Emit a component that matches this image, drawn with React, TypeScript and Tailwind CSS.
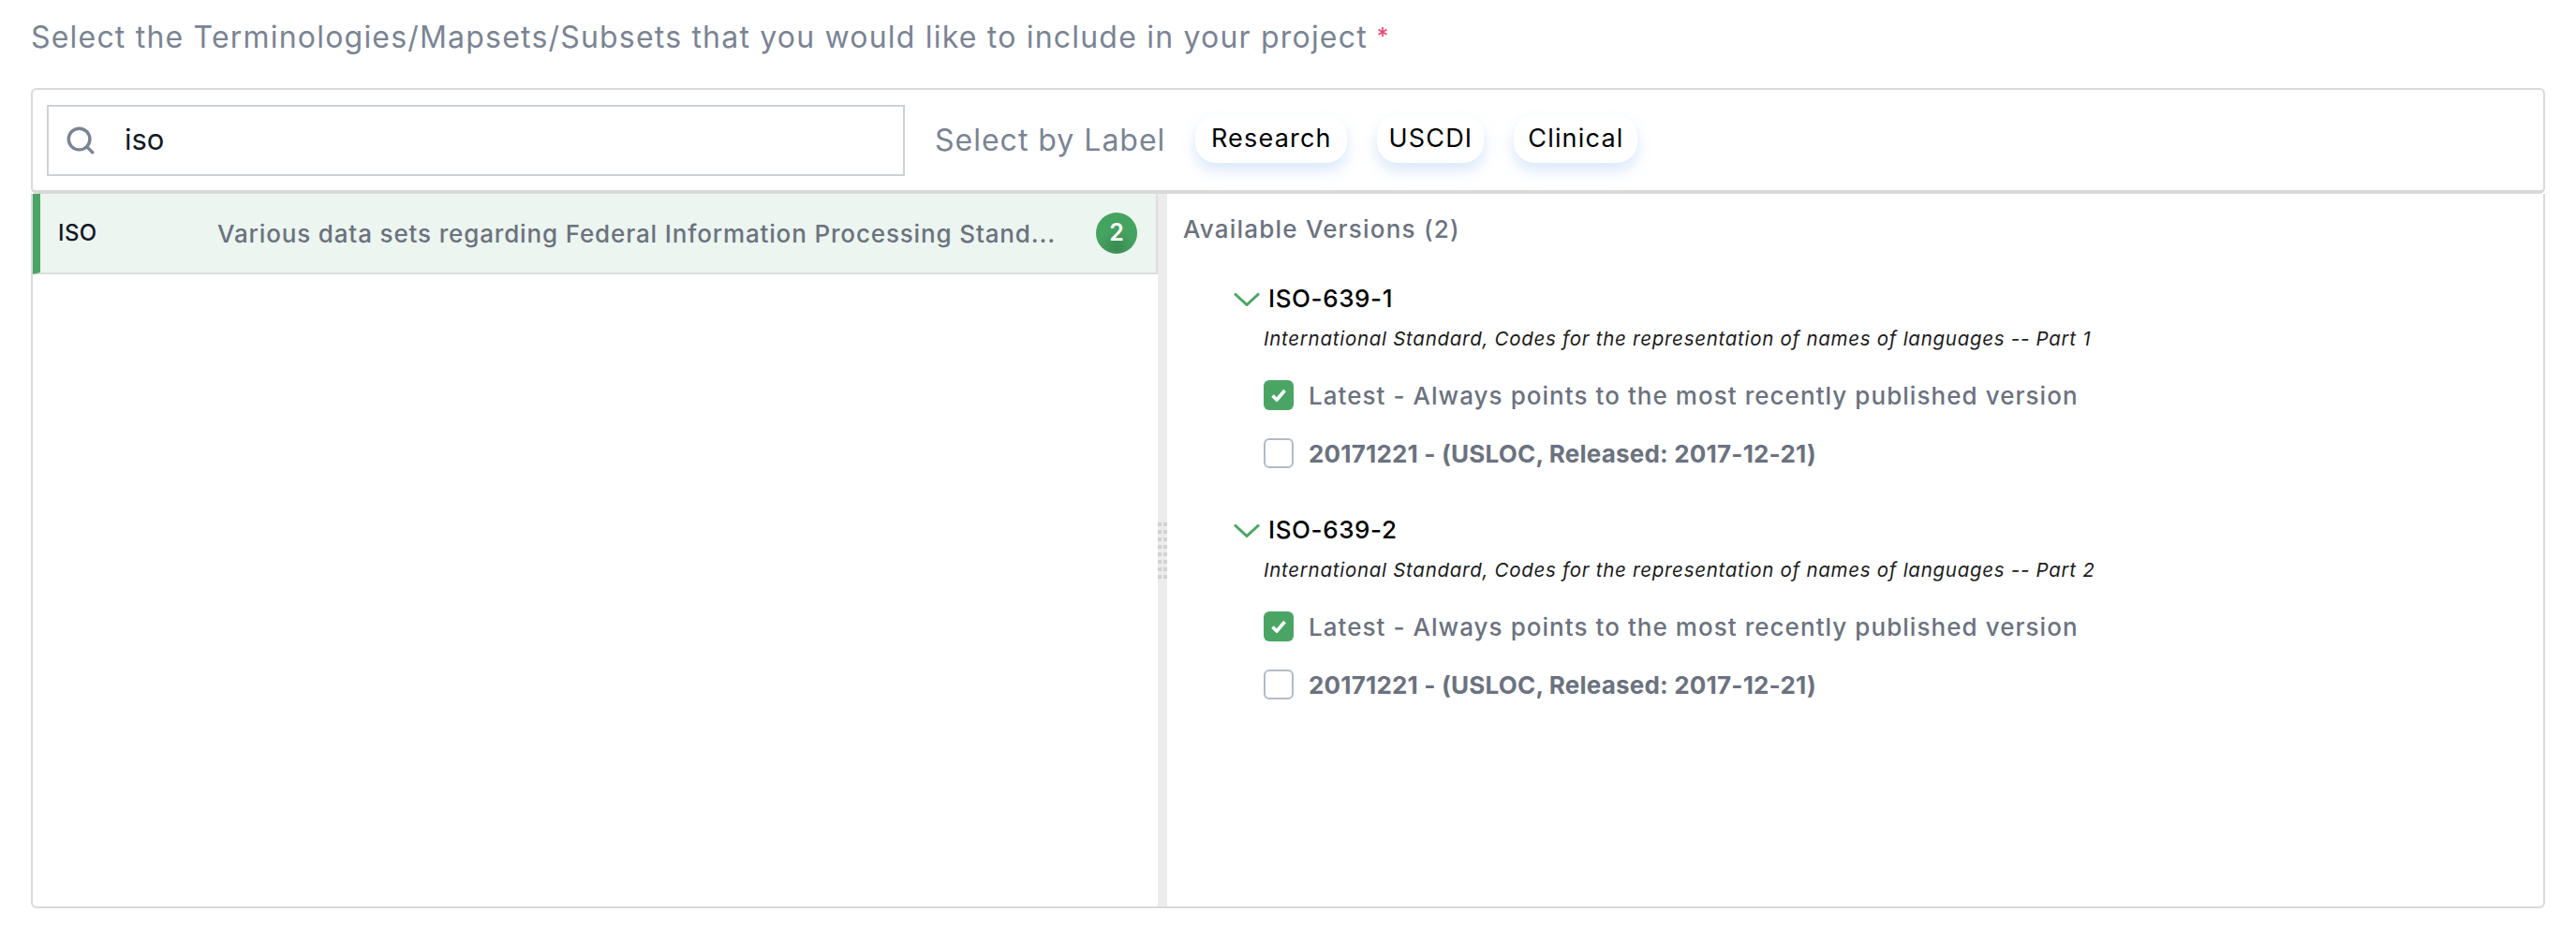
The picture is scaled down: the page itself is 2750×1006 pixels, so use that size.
import { Search } from "lucide-react"

const font = { fontFamily: "Inter, 'Noto Sans', sans-serif" }

function Chevron() {
  return (
    <svg width="28" height="15" viewBox="0 0 28 15" fill="none" className="shrink-0">
      <path d="M1 1.5 L14 13.5 L27 1.5" stroke="#4aa564" strokeWidth="3" />
    </svg>
  )
}

function Checkbox({ checked }: { checked?: boolean }) {
  if (checked) {
    return (
      <div className="flex h-8 w-8 shrink-0 items-center justify-center rounded-md bg-[#4aa564]">
        <svg width="16" height="14" viewBox="0 0 16 14" fill="none">
          <path d="M1.5 7.5 L6 12 L14.5 2" stroke="white" strokeWidth="3.6" />
        </svg>
      </div>
    )
  }
  return <div className="h-8 w-8 shrink-0 rounded-md border-2 border-[#b3bac6] bg-white" />
}

function Chip({ label, width }: { label: string; width: string }) {
  return (
    <div className={`flex h-[51px] items-center justify-center rounded-[22px] bg-white text-[27px] tracking-[1.2px] text-black shadow-[0_8px_16px_rgba(120,170,235,0.28)] ${width}`}>
      {label}
    </div>
  )
}

function VersionGroup({ name, description }: { name: string; description: string }) {
  return (
    <div className="flex flex-col">
      <div className="flex h-8 items-center gap-[9px] pl-[54px]">
        <Chevron />
        <span className="text-[26px] font-medium leading-8 tracking-[0.6px] text-black">{name}</span>
      </div>
      <div className="mt-[13px] h-7 pl-[86px] text-[20.5px] italic leading-7 tracking-[0.72px] text-[#1c1c1c]">{description}</div>
      <div className="mt-[30px] flex h-8 items-center gap-[16px] pl-[86px]">
        <Checkbox checked />
        <span className="text-[26px] font-medium tracking-[1.05px] text-[#6b7280]">
          Latest - Always points to the most recently published version
        </span>
      </div>
      <div className="mt-[30px] flex h-8 items-center gap-[16px] pl-[86px]">
        <Checkbox />
        <span className="text-[26px] font-bold tracking-[0.2px] text-[#6b7280]">
          20171221 - (USLOC, Released: 2017-12-21)
        </span>
      </div>
    </div>
  )
}

export default function App() {
  return (
    <div className="h-[1006px] w-[2750px] bg-white pl-[33px]" style={font}>
      <div className="flex h-[94px] items-center pb-[14px] text-[32px] tracking-[1.2px] text-[#7a8494]">
        Select the Terminologies/Mapsets/Subsets that you would like to include in your project
        <span className="ml-[10px] text-[25px] text-[#f0436a]">*</span>
      </div>

      <div className="flex h-[113px] w-[2684px] items-center rounded-md border-2 border-b-4 border-[#d9d9d9] pl-[15px]">
        <div className="flex h-[76px] w-[916px] items-center gap-[30px] border-2 border-[#ccd1d6] pl-[17px]">
          <Search size={34} strokeWidth={2.4} className="text-[#7a8494]" />
          <span className="text-[31px] text-[#111827]">iso</span>
        </div>
        <span className="ml-[32px] text-[32px] tracking-[1px] text-[#7a8494]">Select by Label</span>
        <div className="-mt-[2px] ml-[32px] flex gap-8">
          <Chip label="Research" width="w-[162px]" />
          <Chip label="USCDI" width="w-[114px]" />
          <Chip label="Clinical" width="w-[132px]" />
        </div>
      </div>

      <div className="flex h-[763px] w-[2684px] rounded-b-md border-2 border-t-0 border-[#d9d9d9]">
        <div className="w-[1201px] shrink-0">
          <div className="flex h-[86px] items-center border-r-2 border-b-2 border-[#dcdfdc] border-l-[8px] border-l-[#4aa564] bg-[#ecf5ef]">
            <span className="ml-[19px] w-[170px] text-[24px] font-medium tracking-[0.4px] text-[#111827]">ISO</span>
            <span className="w-[894px] whitespace-nowrap text-[26px] font-medium tracking-[0.85px] text-[#6b7280]">
              Various data sets regarding Federal Information Processing Stand...
            </span>
            <div className="ml-[44px] flex h-11 w-11 items-center justify-center rounded-full bg-[radial-gradient(circle_at_50%_85%,#3a8a52,#45a360_45%)] text-[25px] font-semibold text-white">
              2
            </div>
          </div>
        </div>

        <div className="flex w-[10px] shrink-0 items-center bg-[#ececec]">
          <div className="grid h-[60px] w-full grid-cols-[4px_4px] content-between justify-between">
            {Array.from({ length: 16 }).map((_, i) => (
              <div key={i} className="h-1 w-1 bg-[#d2d2d2]" />
            ))}
          </div>
        </div>

        <div className="flex flex-col pl-[17px]">
          <div className="flex h-[74px] items-center text-[26px] font-medium tracking-[1.2px] text-[#6b7280]">
            Available Versions (2)
          </div>
          <div className="mt-[22px] flex flex-col gap-[50px]">
            <VersionGroup
              name="ISO-639-1"
              description="International Standard, Codes for the representation of names of languages -- Part 1"
            />
            <VersionGroup
              name="ISO-639-2"
              description="International Standard, Codes for the representation of names of languages -- Part 2"
            />
          </div>
        </div>
      </div>
    </div>
  )
}
